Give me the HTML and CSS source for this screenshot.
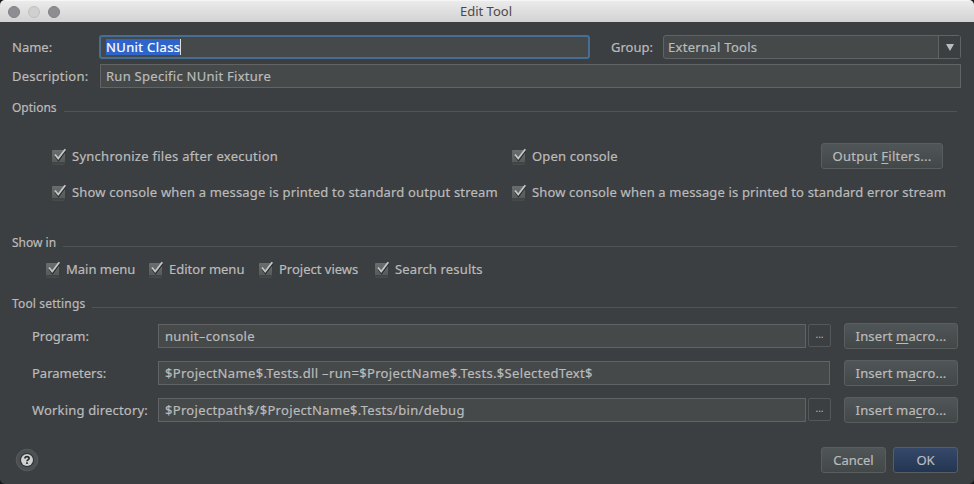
FILE: index.html
```
<!DOCTYPE html>
<html lang="en">
<head>
<meta charset="utf-8">
<title>Edit Tool</title>
<link rel="stylesheet" href="styles.css">
</head>
<body>
<svg class="defs" width="0" height="0" aria-hidden="true">
  <defs>
    <linearGradient id="box" x1="0" y1="0" x2="0" y2="1"><stop offset="0" stop-color="#6b6e6e"/><stop offset="1" stop-color="#555859"/></linearGradient>
    <symbol id="check" viewBox="0 0 16 18">
      <path d="M1.500 17H13.500" stroke="#555657"/>
      <rect x="1" y="3" width="13" height="13" rx="1" fill="url(#box)"/>
      <path d="M1.500 15.800H13.500" stroke="#3a3c3d"/>
      <path d="M4.300 9L7.500 13L14.300 4" fill="none" stroke="#2a2d2e" stroke-width="2"/>
      <path d="M4 7.500L7.200 11.600L14.300 2.200" fill="none" stroke="#c4c6c6" stroke-width="1.800"/>
    </symbol>
  </defs>
</svg>
<div class="window">
  <header class="titlebar">
    <div class="lights"><i></i><i class="dim"></i><i></i></div>
    <h1>Edit Tool</h1>
  </header>
  <main>
    <div class="row name-row">
      <label class="name-label">Name:</label>
      <div class="field focused"><span class="selected">NUnit Class</span></div>
      <label class="group-label">Group:</label>
      <div class="combo"><span>External Tools</span><div class="arrow"><svg width="8" height="7"><path d="M0 0H8L4 7Z" fill="#bbb"/></svg></div></div>
    </div>
    <div class="row desc-row">
      <label class="desc-label">Description:</label>
      <div class="field"><span class="t-desc">Run Specific NUnit Fixture</span></div>
    </div>
    <div class="section s-options"><h2>Options</h2><hr></div>
    <div class="options">
      <div class="check"><svg><use href="#check"/></svg><span class="t-sync">Synchronize files after execution</span></div>
      <div class="check"><svg><use href="#check"/></svg><span class="t-open">Open console</span><div class="button filters"><span>Output <u>F</u>ilters...</span></div></div>
      <div class="check"><svg><use href="#check"/></svg><span class="t-out">Show console when a message is printed to standard output stream</span></div>
      <div class="check"><svg><use href="#check"/></svg><span class="t-err">Show console when a message is printed to standard error stream</span></div>
    </div>
    <div class="section s-show"><h2>Show in</h2><hr></div>
    <div class="places">
      <div class="check p1"><svg><use href="#check"/></svg><span>Main menu</span></div>
      <div class="check p2"><svg><use href="#check"/></svg><span>Editor menu</span></div>
      <div class="check p3"><svg><use href="#check"/></svg><span>Project views</span></div>
      <div class="check p4"><svg><use href="#check"/></svg><span>Search results</span></div>
    </div>
    <div class="section s-tool"><h2>Tool settings</h2><hr></div>
    <div class="settings">
      <div class="row"><label class="t-prog">Program:</label><div class="field"><span class="t-nunit">nunit–console</span></div><div class="browse">...</div><div class="button macro"><span>Insert <u>m</u>acro...</span></div></div>
      <div class="row"><label class="t-par">Parameters:</label><div class="field"><span class="t-params">$ProjectName$.Tests.dll –run=$ProjectName$.Tests.$SelectedText$</span></div><div class="button macro"><span>Insert m<u>a</u>cro...</span></div></div>
      <div class="row"><label class="t-work">Working directory:</label><div class="field"><span class="t-path">$Projectpath$/$ProjectName$.Tests/bin/debug</span></div><div class="browse">...</div><div class="button macro"><span>Insert ma<u>c</u>ro...</span></div></div>
    </div>
    <footer>
      <svg class="help" width="24" height="24" viewBox="0 0 24 24"><circle cx="12" cy="12" r="10.800" fill="#4b5052" stroke="#585c5d"/><circle cx="12" cy="12" r="7" fill="#2b2e2f"/><circle cx="12" cy="12" r="6" fill="#d0d1d1"/><path d="M9.900 10.500Q10 8.600 12 8.600Q14.100 8.600 14.100 10.300Q14.100 11.300 12.900 11.900Q12 12.400 12 13.300M12 14.300V16" fill="none" stroke="#292c2d" stroke-width="1.700"/></svg>
      <div class="button cancel"><span>Cancel</span></div>
      <div class="button ok"><span>OK</span></div>
    </footer>
  </main>
</div>
</body>
</html>
```
FILE: styles.css
```
* { box-sizing: border-box; }
body { margin: 0; background: #151719; font: 13px/18px "Noto Sans", "Open Sans", sans-serif; color: #bbb; -webkit-text-stroke: 0.2px; }
.defs { display: block; }
.window { width: 974px; height: 484px; background: #3c3f41; border-radius: 5px; overflow: hidden; }
.titlebar { height: 22px; display: grid; grid-template-columns: 1fr auto 1fr; align-items: center; background: linear-gradient(#ebebeb, #d2d2d2); border-top: 1px solid #f6f6f6; }
.lights { display: flex; gap: 8px; padding-left: 8px; }
.lights i { width: 12px; height: 12px; border-radius: 50%; background: #8e8d92; border: 1px solid #818085; }
.lights .dim { background: #d0d0d0; border-color: #c0c0c0; }
h1 { margin: 0 2px 0 0; font-size: 13px; font-weight: 400; line-height: 20px; color: #4a4a4a; -webkit-text-stroke: 0; transform: translateY(-1px); }
main { display: flex; flex-direction: column; padding: 10px 12px 0; }
span, label, h1, h2 { white-space: nowrap; }
.row { display: flex; align-items: center; }
.name-row { height: 29px; }
.desc-row { height: 29px; }
.name-label, .desc-label { width: 88px; flex: none; }
.desc-label { letter-spacing: 0.25px; }
.field { height: 24px; flex: 1; display: flex; align-items: center; padding-left: 5px; background: #45494a; border: 1px solid #616364; min-width: 0; }
.name-row .field { flex: none; width: 491px; margin-left: -1px; padding-left: 5px; }
.focused { border: 2px solid #466d94; border-radius: 3px; }
.desc-row .field { margin-right: 1px; padding-left: 5px; }
.selected { background: #2f65ca; color: #fff; height: 16px; line-height: 16px; border-right: 1px solid #ddd; letter-spacing: 0.38px; }
.group-label { margin-left: 21px; width: 52px; flex: none; }
.combo { width: 298px; height: 24px; display: flex; align-items: center; justify-content: space-between; padding-left: 4px; background: #45494a; border: 1px solid #616364; border-radius: 3px; letter-spacing: 0.3px; }
.arrow { width: 22px; height: 22px; display: flex; align-items: center; justify-content: center; background: #3c3f41; border-left: 1px solid #616364; padding-top: 2px; }
.section { height: 20px; display: flex; align-items: center; }
h2 { margin: 0; font-size: 12px; font-weight: 400; line-height: 20px; }
hr { flex: 1; height: 1px; margin: 7px 5px 0 7px; border: 0; background: #515354; }
.s-options { margin-top: 8px; }
.options { display: grid; grid-template-columns: 460px 1fr; grid-template-rows: 36px 36px; margin: 20px 0 0 39px; }
.check { display: flex; align-items: center; }
.check svg { width: 16px; height: 18px; margin-right: 5px; flex: none; }
.button { height: 26px; display: flex; align-items: center; justify-content: center; border: 1px solid #5b5e5f; border-radius: 3px; background: linear-gradient(#505658, #424748); }
.filters { width: 122px; margin: 0 19px 0 auto; letter-spacing: 0.25px; }
u { text-underline-offset: 2px; text-decoration-thickness: 1px; }
.t-desc, .t-sync { letter-spacing: 0.27px; }
.t-open, .t-out, .t-work { letter-spacing: 0.17px; }
.t-err, .p4, .macro { letter-spacing: 0.15px; }
.t-nunit, .t-params { letter-spacing: 0.34px; }
.t-path { letter-spacing: 0.32px; }
.s-show { margin-top: 23px; }
.places { display: flex; height: 32px; margin-bottom: 2px; align-items: center; margin-left: 33px; }
.p1 { width: 103px; } .p2 { width: 110px; } .p3 { width: 116px; }
.s-tool { margin-top: 7px; }
.s-tool h2 { letter-spacing: 0.15px; }
.settings { display: flex; flex-direction: column; margin: 3px 4px 0 20px; }
.settings .row { height: 37px; }
.settings label { width: 126px; flex: none; }
.settings .field { padding-left: 6px; }
.browse { width: 23px; height: 23px; margin-left: 2px; margin-right: -1px; border: 1px solid #555859; border-radius: 2px; text-align: center; font-size: 10px; line-height: 18px; -webkit-text-stroke: 0; }
.macro { width: 114px; margin-left: 14px; }
footer { display: flex; align-items: center; height: 26px; margin: 19px 4px 0; }
.help { margin: 0 auto 0 -1px; }
.cancel { width: 65px; margin-right: 7px; }
.ok { width: 65px; background: linear-gradient(#36496a, #223552); }
```
